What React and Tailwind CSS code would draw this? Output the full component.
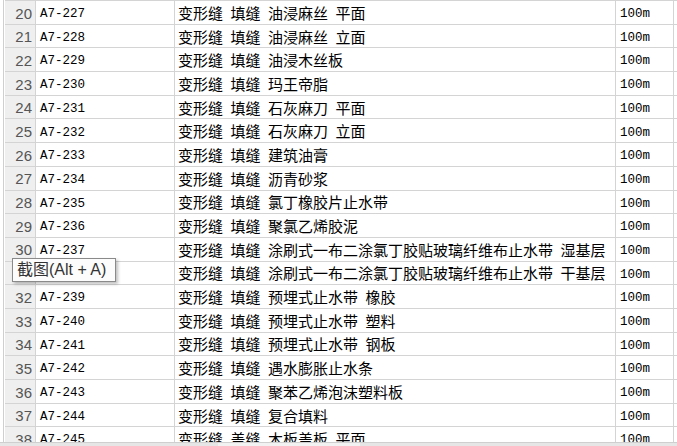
import React from "react";

const rows = [
  [20, "A7-227", "变形缝 填缝 油浸麻丝 平面"],
  [21, "A7-228", "变形缝 填缝 油浸麻丝 立面"],
  [22, "A7-229", "变形缝 填缝 油浸木丝板"],
  [23, "A7-230", "变形缝 填缝 玛王帝脂"],
  [24, "A7-231", "变形缝 填缝 石灰麻刀 平面"],
  [25, "A7-232", "变形缝 填缝 石灰麻刀 立面"],
  [26, "A7-233", "变形缝 填缝 建筑油膏"],
  [27, "A7-234", "变形缝 填缝 沥青砂浆"],
  [28, "A7-235", "变形缝 填缝 氯丁橡胶片止水带"],
  [29, "A7-236", "变形缝 填缝 聚氯乙烯胶泥"],
  [30, "A7-237", "变形缝 填缝 涂刷式一布二涂氯丁胶贴玻璃纤维布止水带 湿基层"],
  [31, "A7-238", "变形缝 填缝 涂刷式一布二涂氯丁胶贴玻璃纤维布止水带 干基层"],
  [32, "A7-239", "变形缝 填缝 预埋式止水带 橡胶"],
  [33, "A7-240", "变形缝 填缝 预埋式止水带 塑料"],
  [34, "A7-241", "变形缝 填缝 预埋式止水带 钢板"],
  [35, "A7-242", "变形缝 填缝 遇水膨胀止水条"],
  [36, "A7-243", "变形缝 填缝 聚苯乙烯泡沫塑料板"],
  [37, "A7-244", "变形缝 填缝 复合填料"],
  [38, "A7-245", "变形缝 盖缝 木板盖板 平面"],
];

const cjk = { fontFamily: '"Noto Sans CJK SC", sans-serif' };
const mono = { fontFamily: '"Liberation Mono", monospace' };

const Row = ({ no, code, name }) => (
  <div className="flex h-[23.7px] shrink-0 border-b border-[#d4d4d4]">
    <div
      className="w-[31px] shrink-0 bg-[#efefef] border-r border-[#d4d4d4] flex items-center justify-end pr-[3px] pt-[3px] text-[15px] text-[#555]"
      style={{ fontFamily: '"Liberation Sans", sans-serif' }}
    >
      {no}
    </div>
    <div
      className="w-[139px] shrink-0 border-r border-[#d4d4d4] flex items-center pl-[4px] pt-[4px] text-[12.5px] leading-none text-black"
      style={mono}
    >
      {code}
    </div>
    <div
      className="w-[441px] shrink-0 border-r border-[#d4d4d4] flex items-center gap-[7.5px] pl-[3px] text-[15px] leading-none text-black whitespace-nowrap overflow-hidden"
      style={cjk}
    >
      {name.split(" ").map((p, i) => (
        <span key={i}>{p}</span>
      ))}
    </div>
    <div
      className="w-[58px] shrink-0 border-r border-[#d4d4d4] flex items-center pl-[4px] pt-[4px] text-[12.5px] leading-none text-black"
      style={mono}
    >
      100m
    </div>
  </div>
);

export default function App() {
  return (
    <div className="w-[677px] h-[446px] bg-white flex flex-col overflow-hidden">
      <div className="relative flex-1 overflow-hidden pl-[3px]">
        <div className="h-full border-l border-[#cfcfcf] pl-[1px]">
          <div className="flex flex-col border-t border-[#d4d4d4]">
            {rows.map(([no, code, name]) => (
              <Row key={no} no={no} code={code} name={name} />
            ))}
          </div>
        </div>
        <div
          className="absolute left-[12px] top-[258px] w-[104px] h-[24px] bg-[#fcfcfc] border border-[#8a8a8a] shadow-[2px_2px_3px_rgba(0,0,0,0.25)] flex items-center pl-[4px] text-[16px] text-[#333] whitespace-nowrap"
          style={{ fontFamily: '"Liberation Sans", "Noto Sans CJK SC", sans-serif' }}
        >
          截图(Alt + A)
        </div>
      </div>
      <div className="h-[4px] shrink-0 bg-[#e6e6e6] border-t border-[#cfcfcf] flex">
        <div className="ml-[218px] w-[142px] bg-[#f2f2f2]" />
      </div>
    </div>
  );
}
